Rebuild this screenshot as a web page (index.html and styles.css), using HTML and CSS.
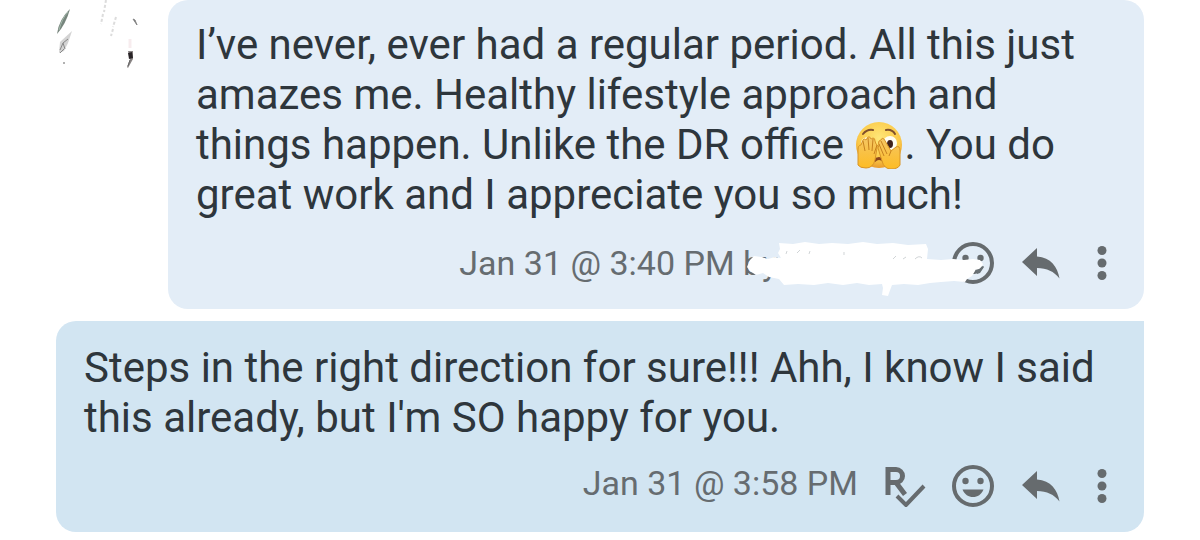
FILE: index.html
```html
<!DOCTYPE html>
<html lang="en">
<head>
<meta charset="utf-8">
<meta name="viewport" content="width=device-width, initial-scale=1">
<title>Messages</title>
<link rel="stylesheet" href="styles.css">
</head>
<body>
<svg class="sprite" aria-hidden="true">
  <symbol id="smile" viewBox="0 0 42 42">
    <circle cx="21" cy="21" r="19" fill="none" stroke="currentColor" stroke-width="4"/>
    <circle cx="13.500" cy="16" r="3.200"/><circle cx="28.500" cy="16" r="3.200"/>
    <path d="M10.500 24.500h21C29.500 29.500 25.500 32 21 32s-8.500-2.500-10.500-7.500z"/>
  </symbol>
  <symbol id="reply" viewBox="0 0 42 42">
    <path d="M17 6v8.500C31 15.500 37.500 25 39.500 36.500C34 29.500 27 26 17 26v8L2 20z"/>
  </symbol>
  <symbol id="more" viewBox="0 0 28 42">
    <circle cx="14" cy="8.500" r="4.500"/><circle cx="14" cy="21" r="4.500"/><circle cx="14" cy="33.500" r="4.500"/>
  </symbol>
  <symbol id="read" viewBox="0 0 42 42">
    <path d="M4 30V4.500h8a6.500 6.500 0 0 1 0 13H4M12 17.500l9 12" fill="none" stroke="currentColor" stroke-width="5"/>
    <path d="M13 31l9 9 18-19" fill="none" stroke="currentColor" stroke-width="4"/>
  </symbol>
</svg>
<main class="thread">
  <div class="row">
    <div class="avatar">
      <svg class="avatar-art" viewBox="0 0 112 74" aria-hidden="true">
        <path d="M14 9Q3 19 1 34Q10 24 14 9z" fill="#77857d"/>
        <path d="M3 30Q6 18 12 12" stroke="#a2b8aa" fill="none"/>
        <path d="M16 31L4 42L3 53L8 51L12 43z" fill="#b5b5b5" opacity=".6"/>
        <path d="M4 50l3-7 2 6M7 43l5-4M4 53l4-4" stroke="#888" fill="none"/>
        <path d="M50 0l-2 12M47 14l-2 10M60 17l-3 10M57 29l-2 7" stroke="#aaa" stroke-width="2" stroke-dasharray="3 2" opacity=".4"/>
        <circle cx="8" cy="63" r="1" fill="#999"/>
        <path d="M77 19l4 6-2-5z" fill="#555" stroke="#888"/>
        <path d="M72 51h5v8l-5 9-1-1 3-8z" fill="#8a8585"/>
        <path d="M72 53l4-1 1 6-4 1z" fill="#292427"/>
        <path d="M74 60l-2 6" stroke="#666"/>
        <path d="M74 39v9" stroke="#f7ecee" stroke-width="3"/>
      </svg>
    </div>
    <article class="bubble received">
      <p class="text">I’ve never, ever had a regular period. All this just amazes me. Healthy lifestyle approach and things happen. Unlike the DR office <svg class="emoji" viewBox="0 0 50 48" role="img" aria-label="Face with peeking eye">
        <defs>
          <radialGradient id="face" cx=".5" cy=".35" r=".65"><stop offset="0" stop-color="#ffe779"/><stop offset=".7" stop-color="#fbc948"/><stop offset="1" stop-color="#e99b2e"/></radialGradient>
          <linearGradient id="hand" x2="0" y2="1"><stop offset="0" stop-color="#f5c765"/><stop offset="1" stop-color="#fdbc25"/></linearGradient>
        </defs>
        <circle cx="25" cy="24" r="23" fill="url(#face)"/>
        <path d="M9 13q4-5 10-4M32 9q6-1 9 4" fill="none" stroke="#80502c" stroke-width="2" stroke-linecap="round"/>
        <ellipse cx="14" cy="22" rx="7" ry="6" fill="#fff3cd"/>
        <ellipse cx="36" cy="22" rx="7" ry="7" fill="#fffdf1"/>
        <ellipse cx="36" cy="23" rx="3" ry="4" fill="#40221d"/>
        <path d="M20 40q5-5 10 0" fill="none" stroke="#8b461e" stroke-width="3"/>
        <path d="M4 44V29q0-5 3-5l2-5q1-2 3 0l2-3q2-1 3 2l2-1q2 0 2 3l1 3q2 0 1 4l-2 12q-2 8-9 8-6 0-8-3z" fill="url(#hand)" stroke="#d89426"/>
        <path d="M46 44V30q0-6-4-4l-5 4-7-12q-2-2-3 1l-2 1q-1 2 0 4l-1 3 4 13q2 8 9 8 7 0 9-4z" fill="url(#hand)" stroke="#d89426"/>
        <path d="M9 20l2 10M14 17l1 12M19 18l-1 12M23 24l-3 9M27 20l6 13M25 23l5 12M37 30l-2 5" fill="none" stroke="#c6811f"/>
      </svg>. You do great work and I appreciate you so much!</p>
      <footer class="meta">
        <span class="stamp redacted">Jan 31 @ 3:40 PM by</span>
        <button class="icon" type="button" aria-label="Add reaction"><svg viewBox="0 0 42 42"><use href="#smile"/></svg></button>
        <button class="icon" type="button" aria-label="Reply"><svg viewBox="0 0 42 42"><use href="#reply"/></svg></button>
        <button class="icon narrow" type="button" aria-label="More options"><svg viewBox="0 0 28 42"><use href="#more"/></svg></button>
        <svg class="scribble" viewBox="0 0 240 60" aria-hidden="true">
          <path d="M4 18l4-4 7 1 7 2 7-2 6 1-3-5 2-4-1-6 14 1 12-2 14 2 13-1 16 1 15-2 14 2 16-1 15 2 18-1 2 5-1 10 14 1 12-1 11 1 9-1 7 1 3 4-3 5-5 2-3 5-5 3-2 3-11-1-13 1-11 1-12 2-14-1-12 1-3 8-1 3-6-1 1-7-1-4-13 1-12-2-14 2-15-2-14 2-16-1-14 1-5-6-10-2-6-4-7 2-6-4-3-4z" fill="#fff"/>
          <path d="M40 12l1-3M51 11l3-3M63 12l1-3M98 10v3M147 17l3-3M157 17l3-2M169 17q4-4 7-1" fill="none" stroke="#c4c9cc" stroke-width="1" opacity=".8"/>
          <path d="M229 28l4-1 4-3 1 1-4 6-3 1z" fill="#687074"/>
        </svg>
      </footer>
    </article>
  </div>
  <article class="bubble sent">
    <p class="text">Steps in the right direction for sure!!! Ahh, I know I said this already, but I'm SO happy for you.</p>
    <footer class="meta">
      <span class="stamp">Jan 31 @ 3:58 PM</span>
      <button class="icon" type="button" aria-label="Read receipt"><svg viewBox="0 0 42 42"><use href="#read"/></svg></button>
      <button class="icon" type="button" aria-label="Add reaction"><svg viewBox="0 0 42 42"><use href="#smile"/></svg></button>
      <button class="icon" type="button" aria-label="Reply"><svg viewBox="0 0 42 42"><use href="#reply"/></svg></button>
      <button class="icon narrow" type="button" aria-label="More options"><svg viewBox="0 0 28 42"><use href="#more"/></svg></button>
    </footer>
  </article>
</main>
</body>
</html>
```
FILE: styles.css
```css
* { box-sizing: border-box; }
body {
  margin: 0;
  background: #fff;
  color: #2e363c;
  font-family: Roboto, "Liberation Sans", sans-serif;
}
.sprite { position: absolute; width: 0; height: 0; }
.thread {
  display: flex;
  flex-direction: column;
  gap: 12px;
  padding: 0 56px 8px;
}
.row { display: flex; }
.avatar { flex: 0 0 112px; }
.avatar-art { display: block; width: 112px; }
.bubble {
  padding: 22px 28px 25px;
  border-radius: 20px;
}
.received { flex: 1; min-width: 0; padding-top: 20px; background: #e3edf7; }
.sent { background: #d2e5f2; border-top-right-radius: 0; }
.text {
  margin: 0 0 22px;
  font-size: 42px;
  line-height: 50px;
}
.emoji { width: 50px; height: 48px; vertical-align: -10px; }
.meta {
  position: relative;
  display: flex;
  align-items: flex-start;
  justify-content: flex-end;
  gap: 26px;
  color: #666c70;
}
.stamp { font-size: 34px; line-height: 42px; white-space: nowrap; }
.redacted { padding-right: 148px; }
.sent .stamp { line-height: 36px; }
.icon {
  width: 42px;
  height: 42px;
  padding: 0;
  border: 0;
  background: none;
  color: #666b6e;
}
.icon.narrow { width: 28px; }
.icon svg { display: block; width: 100%; height: 100%; fill: currentColor; }
.scribble { position: absolute; right: 130px; top: 0; width: 240px; height: 60px; }
```
